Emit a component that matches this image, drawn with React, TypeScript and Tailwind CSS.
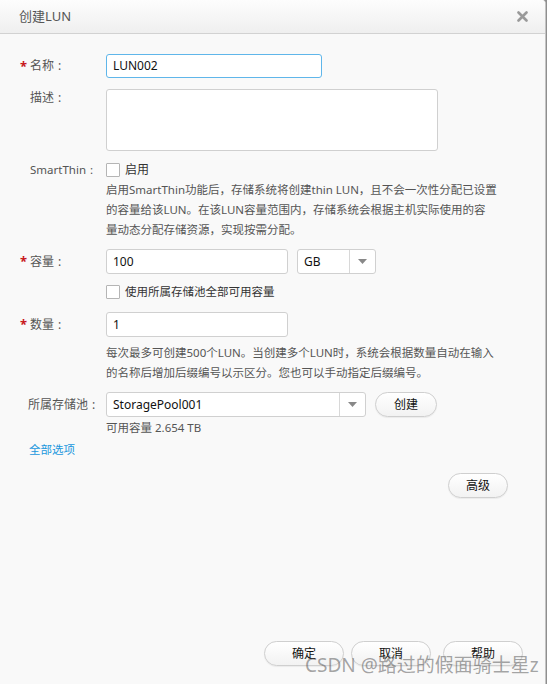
import React from 'react'

const FONT = { fontFamily: '"Noto Sans", "Noto Sans CJK SC", sans-serif' }

function Star() {
  return <span className="inline-block w-[10px] text-[#c8161d] text-[13px] font-bold leading-none">*</span>
}

function Label({ text, required, className = '' }: { text: string; required?: boolean; className?: string }) {
  return (
    <div className={`w-[106px] shrink-0 pl-[20px] flex items-center text-[12px] text-[#555] ${className}`}>
      {required ? <Star /> : <span className="inline-block w-[10px]" />}
      <span>{text}</span>
      <span className="ml-[4px]">:</span>
    </div>
  )
}

function Checkbox() {
  return <span className="inline-block w-[14px] h-[14px] border border-[#b5b5b5] bg-white rounded-[1px]" />
}

function Caret() {
  return (
    <svg width="9" height="5" viewBox="0 0 9 5">
      <path d="M0 0 L9 0 L4.5 5 Z" fill="#888" />
    </svg>
  )
}

function PillButton({ text, className = '' }: { text: string; className?: string }) {
  return (
    <button className={`h-[25px] rounded-full border border-[#cfcfcf] bg-gradient-to-b from-white to-[#f2f2f2] text-[12px] text-[#111] shadow-[0_1px_1px_rgba(0,0,0,0.06)] ${className}`}>
      {text}
    </button>
  )
}

export default function App() {
  return (
    <div className="w-[547px] h-[684px] bg-[#8f8f8f] flex" style={FONT}>
      <div className="relative w-[546px] h-[684px] bg-[#f9f9f9] border-r border-[#c4c4c4] rounded-tr-[4px] flex flex-col overflow-hidden">
        {/* header */}
        <div className="h-[34px] shrink-0 flex items-center justify-between pl-[19px] pr-[17px] bg-gradient-to-b from-[#fdfdfd] to-[#efefef] border-b border-[#d2d2d2]">
          <span className="text-[13px] text-[#555]">创建LUN</span>
          <svg width="11" height="11" viewBox="0 0 11 11">
            <path d="M1.5 1.5 L9.5 9.5 M9.5 1.5 L1.5 9.5" stroke="#9a9a9a" strokeWidth="2.6" strokeLinecap="round" />
          </svg>
        </div>

        {/* body */}
        <div className="flex flex-col pt-[20px]">
          <div className="flex h-[24px]">
            <Label text="名称" required />
            <div className="w-[216px] h-[24px] rounded-[3px] border border-[#5fb6ea] bg-white flex items-center px-[6px] text-[12px] text-[#111]">LUN002</div>
          </div>

          <div className="flex mt-[11px]">
            <Label text="描述" className="h-[16px] mt-[1px]" />
            <div className="w-[332px] h-[62px] rounded-[3px] border border-[#d0d0d0] bg-white" />
          </div>

          <div className="flex h-[18px] mt-[10px]">
            <Label text="SmartThin" className="!text-[11.5px]" />
            <div className="flex items-center gap-[5px]">
              <Checkbox />
              <span className="text-[12px] text-[#333]">启用</span>
            </div>
          </div>
          <div className="ml-[106px] whitespace-nowrap text-[11.5px] leading-[20px] text-[#555] mt-[1px]">
            启用SmartThin功能后，存储系统将创建thin LUN，且不会一次性分配已设置<br />
            的容量给该LUN。在该LUN容量范围内，存储系统会根据主机实际使用的容<br />
            量动态分配存储资源，实现按需分配。
          </div>

          <div className="flex h-[25px] mt-[9px]">
            <Label text="容量" required />
            <div className="w-[182px] h-[25px] rounded-[3px] border border-[#d0d0d0] bg-white flex items-center px-[6px] text-[12px] text-[#111]">100</div>
            <div className="ml-[9px] w-[79px] h-[25px] rounded-[3px] border border-[#d0d0d0] bg-white flex items-center">
              <span className="flex-1 pl-[6px] text-[12px] text-[#111]">GB</span>
              <span className="w-[26px] h-full border-l border-[#d8d8d8] flex items-center justify-center"><Caret /></span>
            </div>
          </div>

          <div className="flex items-center gap-[5px] ml-[106px] mt-[11px] h-[14px]">
            <Checkbox />
            <span className="text-[11.5px] text-[#333]">使用所属存储池全部可用容量</span>
          </div>

          <div className="flex h-[25px] mt-[13px]">
            <Label text="数量" required />
            <div className="w-[182px] h-[25px] rounded-[3px] border border-[#d0d0d0] bg-white flex items-center px-[6px] text-[12px] text-[#111]">1</div>
          </div>
          <div className="ml-[106px] whitespace-nowrap text-[11.5px] leading-[20px] text-[#555] mt-[6px]">
            每次最多可创建500个LUN。当创建多个LUN时，系统会根据数量自动在输入<br />
            的名称后增加后缀编号以示区分。您也可以手动指定后缀编号。
          </div>

          <div className="flex h-[25px] mt-[9px]">
            <Label text="所属存储池" className="!pl-[18px]" />
            <div className="w-[260px] h-[25px] rounded-[3px] border border-[#d0d0d0] bg-white flex items-center">
              <span className="flex-1 pl-[6px] text-[12px] text-[#111]">StoragePool001</span>
              <span className="w-[26px] h-full border-l border-[#d8d8d8] flex items-center justify-center"><Caret /></span>
            </div>
            <PillButton text="创建" className="ml-[9px] w-[62px]" />
          </div>
          <div className="ml-[106px] text-[11.5px] leading-[20px] text-[#555] mt-[1px]">可用容量 2.654 TB</div>
          <div className="pl-[29px] text-[11.5px] leading-[20px] text-[#1a97dd] mt-[2px]">全部选项</div>

          <div className="flex justify-end pr-[37px] mt-[13px]">
            <PillButton text="高级" className="w-[60px]" />
          </div>
        </div>

        {/* footer */}
        <div className="mt-auto flex justify-end gap-[7px] pr-[22px] pb-[18px]">
          <PillButton text="确定" className="w-[80px]" />
          <PillButton text="取消" className="w-[80px] mr-[5px]" />
          <PillButton text="帮助" className="w-[80px]" />
        </div>

        {/* watermark */}
        <div className="absolute left-[305px] top-[653px] text-[19px] leading-[24px] text-[rgba(90,90,90,0.55)] whitespace-nowrap pointer-events-none">
          CSDN @路过的假面骑士星z
        </div>
      </div>
    </div>
  )
}
